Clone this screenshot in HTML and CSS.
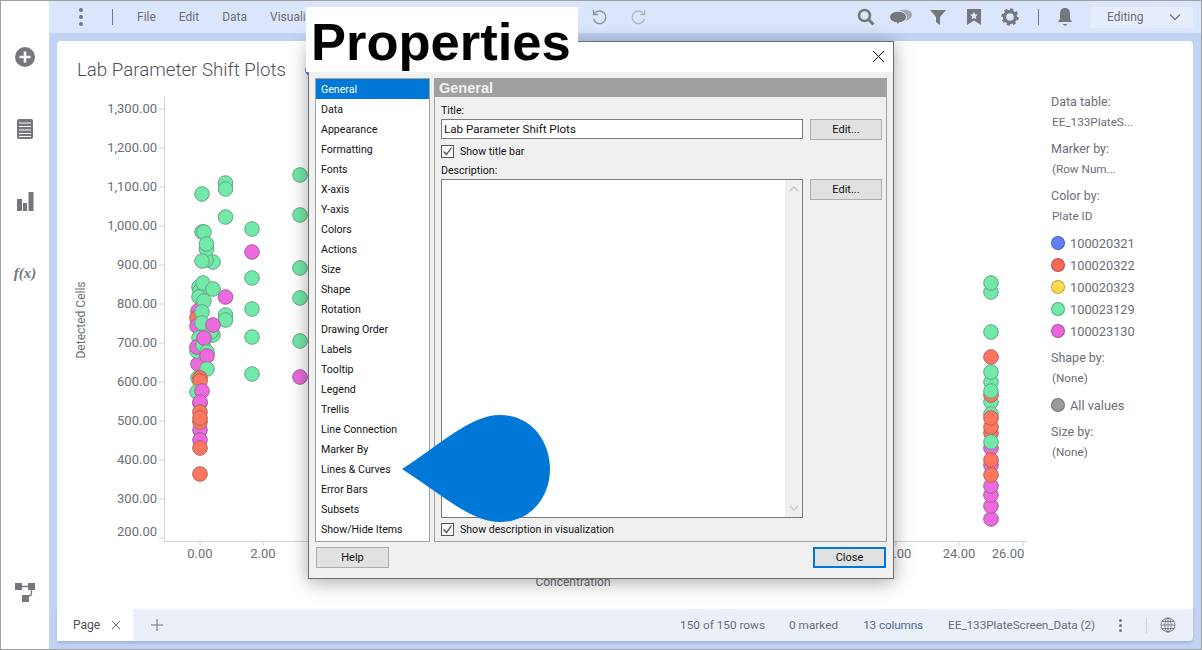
FILE: index.html
```html
<!DOCTYPE html>
<html lang="en">
<head>
  <meta charset="UTF-8">
  <title>Lab Parameter Shift Plots</title>
  <link rel="stylesheet" href="styles.css">
</head>
<body>
  <div class="app">
    <aside class="sidebar">
      <svg class="side-icon" width="22" height="22" viewBox="0 0 22 22"><circle cx="11" cy="11" r="10" fill="#75777f"/><path d="M11 5.500v11M5.500 11h11" stroke="#fff" stroke-width="2.600"/></svg>
      <svg class="side-icon" width="18" height="22" viewBox="0 0 18 22"><rect x="1" y="1" width="16" height="20" rx="2" fill="#75777f"/><path d="M3 5h12M3 8.500h12M3 12h12M3 15.500h12M3 18.500h12" stroke="#fff" stroke-width="1.200"/></svg>
      <svg class="side-icon" width="18" height="22" viewBox="0 0 18 22"><path d="M1 9h5v12H1zM7 13h4v8H7zM12.500 2H17.500v19h-5z" fill="#75777f"/></svg>
      <div class="side-fx">f(x)</div>
      <svg class="side-icon side-flow" width="22" height="22" viewBox="0 0 22 22"><path d="M1 1h7v7H1zM14 1h7v7h-7zM8 13h7v7H8z" fill="#75777f"/><path d="M8 4.500h6M17.500 8v3q0 3-3 3" fill="none" stroke="#75777f" stroke-width="1.300"/></svg>
    </aside>

    <main class="main">
      <header class="top-bar">
        <div class="kebab"><span></span><span></span><span></span></div>
        <div class="top-divider"></div>
        <nav class="top-menu">
          <span>File</span><span>Edit</span><span>Data</span><span>Visualization</span>
        </nav>
        <div class="history">
          <svg width="18" height="18" viewBox="0 0 18 18"><path d="M4.500 5.500a6.300 6.300 0 1 1-1 5.500" fill="none" stroke="#8e929c" stroke-width="1.400"/><path d="M3.500 2v4.500H8" fill="none" stroke="#8e929c" stroke-width="1.400"/></svg>
          <svg width="18" height="18" viewBox="0 0 18 18"><path d="M13.500 5.500a6.300 6.300 0 1 0 1 5.500" fill="none" stroke="#b4b8c2" stroke-width="1.400"/><path d="M14.500 2v4.500H10" fill="none" stroke="#b4b8c2" stroke-width="1.400"/></svg>
        </div>
        <div class="top-tools">
          <svg class="tool-search" width="18" height="18" viewBox="0 0 18 18"><circle cx="7.500" cy="7.500" r="5.500" fill="none" stroke="#75777f" stroke-width="2.600"/><path d="M11.500 11.500l5 5" stroke="#75777f" stroke-width="3"/></svg>
          <svg class="tool-chat" width="24" height="16" viewBox="0 0 24 16"><ellipse cx="15" cy="6" rx="8" ry="5.500" fill="#a2a5ae"/><ellipse cx="9" cy="8" rx="8.500" ry="5.800" fill="#75777f" stroke="#dbe5fb"/><path d="M7 12l2 3 2-3z" fill="#75777f"/></svg>
          <svg class="tool-filter" width="16" height="16" viewBox="0 0 16 16"><path d="M0 1h16L10 8v8L6 13V8z" fill="#75777f"/></svg>
          <svg class="tool-mark" width="14" height="16" viewBox="0 0 14 16"><path d="M0 0h14v16L7 11.500 0 16z" fill="#75777f"/><path d="M7 2.800l1.200 2.500 2.700.3-2 1.900.5 2.700L7 8.900 4.600 10.200l.5-2.700-2-1.900 2.700-.3z" fill="#dbe5fb"/></svg>
          <svg class="tool-gear" width="18" height="18" viewBox="0 0 18 18"><circle cx="9" cy="9" r="5.500" fill="none" stroke="#75777f" stroke-width="3.400"/><circle cx="9" cy="9" r="7.400" fill="none" stroke="#75777f" stroke-width="2.600" stroke-dasharray="3 2.810"/></svg>
          <div class="top-divider"></div>
          <svg class="tool-bell" width="16" height="18" viewBox="0 0 16 18"><path d="M8 0c3.500 0 5 2.500 5 6v5l2 3H1l2-3V6c0-3.500 1.500-6 5-6z" fill="#75777f"/><path d="M5.500 16h5L8 18z" fill="#75777f"/></svg>
          <div class="mode-select">
            <span>Editing</span>
            <svg width="12" height="8" viewBox="0 0 12 8"><path d="M1 1.500l5 5 5-5" fill="none" stroke="#75777f" stroke-width="1.300"/></svg>
          </div>
        </div>
      </header>

      <section class="workspace">
        <div class="card">
          <div class="card-title">
            <h1>Lab Parameter Shift Plots</h1>
            <span class="title-ring"></span>
          </div>
          <div class="card-body">
            <svg class="chart" width="983" height="519" viewBox="57 90 983 519">
              <g class="axis">
                <path d="M164.500 97V541.500H1027"/>
                <path d="M159 109h5M159 148h5M159 187h5M159 226h5M159 265h5M159 304h5M159 343h5M159 382h5M159 421h5M159 460h5M159 499h5M159 538h5"/>
                <path d="M200 541v5M263 541v5M896 541v5M959 541v5M1023 541v5"/>
              </g>
              <g class="tick-y">
                <text x="157" y="113">1,300.00</text>
                <text x="157" y="152">1,200.00</text>
                <text x="157" y="191">1,100.00</text>
                <text x="157" y="230">1,000.00</text>
                <text x="157" y="269">900.00</text>
                <text x="157" y="308">800.00</text>
                <text x="157" y="347">700.00</text>
                <text x="157" y="386">600.00</text>
                <text x="157" y="425">500.00</text>
                <text x="157" y="464">400.00</text>
                <text x="157" y="503">300.00</text>
                <text x="157" y="536">200.00</text>
              </g>
              <g class="tick-x">
                <text x="200" y="558">0.00</text>
                <text x="263" y="558">2.00</text>
                <text x="895" y="558">22.00</text>
                <text x="959" y="558">24.00</text>
                <text x="1008" y="558">26.00</text>
              </g>
              <text class="axis-title" transform="translate(85 320) rotate(-90)">Detected Cells</text>
              <text class="axis-title" x="573" y="586">Concentration</text>

              <g class="dots">
                <circle class="p" cx="300" cy="377"/>
                <circle class="g" cx="300" cy="175"/>
                <circle class="g" cx="300" cy="215"/>
                <circle class="g" cx="300" cy="268"/>
                <circle class="g" cx="300" cy="298"/>
                <circle class="g" cx="300" cy="341"/>
                <circle class="g" cx="252" cy="229"/>
                <circle class="p" cx="252" cy="252"/>
                <circle class="g" cx="252" cy="278"/>
                <circle class="g" cx="252" cy="309"/>
                <circle class="g" cx="252" cy="337"/>
                <circle class="g" cx="252" cy="374"/>
                <circle class="g" cx="225.500" cy="183"/>
                <circle class="g" cx="225.500" cy="189"/>
                <circle class="g" cx="225.500" cy="217"/>
                <circle class="g" cx="225.500" cy="315"/>
                <circle class="g" cx="225.500" cy="320"/>
                <circle class="p" cx="225.500" cy="297"/>
                <circle class="g" cx="202" cy="194"/>
                <circle class="g" cx="202" cy="232"/>
                <circle class="g" cx="204" cy="232"/>
                <circle class="g" cx="213" cy="262"/>
                <circle class="g" cx="206" cy="260"/>
                <circle class="g" cx="206.500" cy="249"/>
                <circle class="g" cx="206.500" cy="244"/>
                <circle class="g" cx="202" cy="261"/>
                <circle class="p" cx="198" cy="364"/>
                <circle class="g" cx="198" cy="378"/>
                <circle class="g" cx="199" cy="287"/>
                <circle class="g" cx="200" cy="291"/>
                <circle class="g" cx="203" cy="283"/>
                <circle class="g" cx="213" cy="289"/>
                <circle class="g" cx="199" cy="297"/>
                <circle class="p" cx="198" cy="311"/>
                <circle class="r" cx="197" cy="318"/>
                <circle class="p" cx="197" cy="326"/>
                <circle class="g" cx="204" cy="301"/>
                <circle class="g" cx="202" cy="312"/>
                <circle class="g" cx="199" cy="338"/>
                <circle class="g" cx="213" cy="335"/>
                <circle class="g" cx="211" cy="332"/>
                <circle class="g" cx="202" cy="323"/>
                <circle class="p" cx="213" cy="325"/>
                <circle class="g" cx="197" cy="351"/>
                <circle class="p" cx="197" cy="347"/>
                <circle class="g" cx="203" cy="345"/>
                <circle class="p" cx="204" cy="338"/>
                <circle class="g" cx="207" cy="352"/>
                <circle class="p" cx="207" cy="356"/>
                <circle class="p" cx="200" cy="403"/>
                <circle class="g" cx="207" cy="369"/>
                <circle class="r" cx="200" cy="378"/>
                <circle class="r" cx="200" cy="381"/>
                <circle class="g" cx="197" cy="392"/>
                <circle class="p" cx="202" cy="391"/>
                <circle class="p" cx="200" cy="402"/>
                <circle class="p" cx="200" cy="430"/>
                <circle class="p" cx="200" cy="440"/>
                <circle class="r" cx="200" cy="412"/>
                <circle class="r" cx="200" cy="422"/>
                <circle class="r" cx="200" cy="418"/>
                <circle class="r" cx="200" cy="448"/>
                <circle class="r" cx="200" cy="474"/>

                <circle class="g" cx="991" cy="292"/>
                <circle class="g" cx="991" cy="283"/>
                <circle class="g" cx="991" cy="332"/>
                <circle class="r" cx="991" cy="357"/>
                <circle class="g" cx="991" cy="382"/>
                <circle class="g" cx="991" cy="372"/>
                <circle class="g" cx="991" cy="402"/>
                <circle class="r" cx="991" cy="395"/>
                <circle class="g" cx="991" cy="391"/>
                <circle class="p" cx="991" cy="519"/>
                <circle class="p" cx="991" cy="506"/>
                <circle class="p" cx="991" cy="495"/>
                <circle class="p" cx="991" cy="486"/>
                <circle class="p" cx="991" cy="465"/>
                <circle class="p" cx="991" cy="448"/>
                <circle class="g" cx="991" cy="414"/>
                <circle class="r" cx="991" cy="433"/>
                <circle class="r" cx="991" cy="427"/>
                <circle class="r" cx="991" cy="418"/>
                <circle class="g" cx="991" cy="442"/>
                <circle class="r" cx="991" cy="460"/>
                <circle class="r" cx="991" cy="475"/>
              </g>
            </svg>

            <aside class="legend">
              <div class="legend-group">
                <div>Data table:</div>
                <div class="legend-value">EE_133PlateS...</div>
              </div>
              <div class="legend-group">
                <div>Marker by:</div>
                <div class="legend-value">(Row Num...</div>
              </div>
              <div class="legend-group">
                <div>Color by:</div>
                <div class="legend-value">Plate ID</div>
              </div>
              <div class="legend-group legend-items">
                <div class="legend-item"><i class="swatch swatch-blue"></i>100020321</div>
                <div class="legend-item"><i class="swatch swatch-red"></i>100020322</div>
                <div class="legend-item"><i class="swatch swatch-yellow"></i>100020323</div>
                <div class="legend-item"><i class="swatch swatch-green"></i>100023129</div>
                <div class="legend-item"><i class="swatch swatch-pink"></i>100023130</div>
              </div>
              <div class="legend-group">
                <div>Shape by:</div>
                <div class="legend-value">(None)</div>
              </div>
              <div class="legend-group legend-items">
                <div class="legend-item"><i class="swatch swatch-gray"></i>All values</div>
              </div>
              <div class="legend-group">
                <div>Size by:</div>
                <div class="legend-value">(None)</div>
              </div>
            </aside>
          </div>
        </div>

        <footer class="status-bar">
          <div class="page-tab">
            <span>Page</span>
            <svg width="10" height="10" viewBox="0 0 10 10"><path d="M1 1l8 8M9 1l-8 8" stroke="#6d7079" stroke-width="1"/></svg>
          </div>
          <svg class="add-page" width="12" height="12" viewBox="0 0 12 12"><path d="M6 0v12M0 6h12" stroke="#6d7079" stroke-width="1"/></svg>
          <div class="status-info">
            <span class="rows">150 of 150 rows</span>
            <span class="marked">0 marked</span>
            <span class="cols">13 columns</span>
            <span class="table-name">EE_133PlateScreen_Data (2)</span>
            <div class="kebab kebab-small"><span></span><span></span><span></span></div>
            <div class="status-divider"></div>
            <svg width="16" height="16" viewBox="0 0 16 16"><g fill="none" stroke="#75777f" stroke-width=".9"><circle cx="8" cy="8" r="7"/><ellipse cx="8" cy="8" rx="3.200" ry="7"/><path d="M8 1v14M1 8h14M2 4.500h12M2 11.500h12"/></g></svg>
          </div>
        </footer>
      </section>
    </main>
  </div>

  <!-- Properties dialog -->
  <div class="dialog">
    <div class="dialog-head">
      <svg width="13" height="13" viewBox="0 0 13 13"><path d="M1 1l11 11M12 1L1 12" stroke="#111" stroke-width="1"/></svg>
    </div>
    <div class="dialog-body">
      <div class="dialog-main">
        <ul class="prop-list">
          <li class="active">General</li>
          <li>Data</li>
          <li>Appearance</li>
          <li>Formatting</li>
          <li>Fonts</li>
          <li>X-axis</li>
          <li>Y-axis</li>
          <li>Colors</li>
          <li>Actions</li>
          <li>Size</li>
          <li>Shape</li>
          <li>Rotation</li>
          <li>Drawing Order</li>
          <li>Labels</li>
          <li>Tooltip</li>
          <li>Legend</li>
          <li>Trellis</li>
          <li>Line Connection</li>
          <li>Marker By</li>
          <li>Lines &amp; Curves</li>
          <li>Error Bars</li>
          <li>Subsets</li>
          <li>Show/Hide Items</li>
        </ul>
        <div class="prop-panel">
          <div class="panel-head">General</div>
          <div class="panel-form">
            <label class="field-label">Title:</label>
            <div class="field-row">
              <div class="text-input">Lab Parameter Shift Plots</div>
              <button class="btn btn-edit">Edit...</button>
            </div>
            <div class="check-row">
              <span class="check"><svg width="11" height="11" viewBox="0 0 11 11"><path d="M1.500 5.500l3 3 5-7" fill="none" stroke="#444" stroke-width="1.200"/></svg></span>
              Show title bar
            </div>
            <label class="field-label field-desc">Description:</label>
            <div class="field-row field-row-grow">
              <div class="text-area">
                <div class="scroll-track">
                  <svg width="10" height="6" viewBox="0 0 10 6"><path d="M1 5l4-4 4 4" fill="none" stroke="#c8c8c8" stroke-width="1.600"/></svg>
                  <svg width="10" height="6" viewBox="0 0 10 6"><path d="M1 1l4 4 4-4" fill="none" stroke="#c8c8c8" stroke-width="1.600"/></svg>
                </div>
              </div>
              <button class="btn btn-edit">Edit...</button>
            </div>
            <div class="check-row check-row-last">
              <span class="check"><svg width="11" height="11" viewBox="0 0 11 11"><path d="M1.500 5.500l3 3 5-7" fill="none" stroke="#444" stroke-width="1.200"/></svg></span>
              Show description in visualization
            </div>
          </div>
        </div>
      </div>
      <div class="dialog-foot">
        <button class="btn btn-foot">Help</button>
        <button class="btn btn-foot btn-default">Close</button>
      </div>
    </div>
  </div>

  <div class="callout-title">Properties</div>
  <svg class="callout-drop" width="150" height="108" viewBox="0 0 150 108">
    <path d="M2 54C40 30 70 0 100 0c30 0 50 25 50 54s-20 53-50 53C70 107 40 78 2 54z" fill="#0078d7"/>
  </svg>
</body>
</html>
```

FILE: styles.css
```css
* {
  box-sizing: border-box;
}

body {
  margin: 0;
  font-family: Roboto, sans-serif;
  color: #6b6e78;
  overflow: hidden;
}

.app {
  display: flex;
  width: 1202px;
  height: 650px;
  border: 1px solid #a0a0a0;
}

.sidebar {
  display: flex;
  flex-direction: column;
  align-items: center;
  width: 48px;
  flex-shrink: 0;
  padding-top: 45px;
  background: #fff;
}

.side-icon {
  display: block;
  margin-bottom: 50px;
}

.side-fx {
  margin-top: 1px;
  font-family: "Liberation Serif", serif;
  font-style: italic;
  font-weight: bold;
  font-size: 15px;
  line-height: 20px;
  color: #75777f;
}

.side-flow {
  margin-top: auto;
  margin-bottom: 45px;
}

.main {
  display: flex;
  flex-direction: column;
  flex: 1;
  min-width: 0;
  background: #c1d2f5;
}

.top-bar {
  display: flex;
  align-items: center;
  height: 32px;
  padding-left: 30px;
  background: #dbe5fb;
  font-size: 12px;
}

.kebab {
  display: flex;
  flex-direction: column;
  gap: 3px;
  width: 4px;
}

.kebab span {
  width: 4px;
  height: 4px;
  border-radius: 50%;
  background: #75777f;
}

.top-divider {
  width: 1px;
  height: 16px;
  margin-left: 29px;
  background: #75777f;
}

.top-menu {
  display: flex;
  gap: 23px;
  margin-left: 24px;
  color: #6b6e78;
}

.history {
  display: flex;
  gap: 22px;
  margin-left: 251px;
}

.top-tools {
  display: flex;
  align-items: center;
  margin-left: auto;
  padding-right: 8px;
}

.tool-chat { margin-left: 14px; }
.tool-filter { margin-left: 17px; }
.tool-mark { margin-left: 21px; }
.tool-gear { margin-left: 20px; }
.top-tools .top-divider { margin-left: 19px; }
.tool-bell { margin-left: 18px; }

.mode-select {
  display: flex;
  align-items: center;
  justify-content: space-between;
  width: 103px;
  height: 21px;
  margin-left: 17px;
  padding: 0 12px 0 17px;
  border-radius: 3px;
  background: #e6edfc;
}

.workspace {
  display: flex;
  flex-direction: column;
  flex: 1;
  min-height: 0;
  padding: 8px;
}

.card {
  flex: 1;
  min-height: 0;
  background: #fff;
  border-radius: 4px 4px 0 0;
}

.card-title {
  display: flex;
  align-items: center;
  height: 49px;
  padding: 8px 0 0 20px;
}

.card-title h1 {
  margin: 0;
  font-size: 18.700px;
  font-weight: 300;
  color: #4d505a;
}

.title-ring {
  width: 12px;
  height: 12px;
  margin-left: 19px;
  border: 2px solid #5672e0;
  border-radius: 50%;
}

.card-body {
  display: flex;
}

.chart {
  display: block;
  flex-shrink: 0;
}

.axis path {
  fill: none;
  stroke: #cfd2e0;
  stroke-width: 1;
}

.tick-y text,
.tick-x text {
  font-size: 13px;
  fill: #6b6e78;
}

.tick-y text { text-anchor: end; }
.tick-x text { text-anchor: middle; }

.axis-title {
  font-size: 12px;
  fill: #6b6e78;
  text-anchor: middle;
}

.dots circle {
  r: 7.300px;
  stroke-width: 1;
}

.g { fill: #72e9a8; stroke: #64a585; }
.p { fill: #ec6ade; stroke: #a0609a; }
.r { fill: #ff7660; stroke: #ad6557; }

.legend {
  margin-left: 11px;
  padding-top: 1px;
  font-size: 12.500px;
  line-height: 21px;
  color: #6b6e78;
}

.legend-group {
  margin-bottom: 5px;
}

.legend-value {
  padding-left: 1px;
  font-size: 11.700px;
}

.legend-items {
  margin-top: 5px;
  margin-bottom: 5px;
}

.legend-item {
  display: flex;
  align-items: center;
  gap: 5px;
  height: 22px;
  font-size: 12.800px;
}

.swatch {
  width: 14px;
  height: 14px;
  border: 1px solid rgba(0, 0, 0, 0.25);
  border-radius: 50%;
}

.swatch-blue { background: #5f80f5; }
.swatch-red { background: #f4695a; }
.swatch-yellow { background: #ffd950; }
.swatch-green { background: #71e8a6; }
.swatch-pink { background: #ea68dc; }
.swatch-gray { background: #9a9a9a; }

.status-bar {
  display: flex;
  align-items: center;
  height: 32px;
  flex-shrink: 0;
  background: #ebeff8;
  border-radius: 0 0 4px 4px;
  box-shadow: 0 2px 3px rgba(90, 110, 160, 0.3);
  font-size: 11.800px;
}

.page-tab {
  display: flex;
  align-items: center;
  gap: 11px;
  width: 76px;
  height: 100%;
  padding-left: 16px;
  background: #fff;
  color: #4d505a;
  font-size: 12px;
}

.add-page {
  margin-left: 18px;
}

.status-info {
  display: flex;
  align-items: center;
  margin-left: auto;
  padding-right: 17px;
}

.marked { margin-left: 24px; }
.cols { margin-left: 25px; color: #4f6a94; letter-spacing: -0.15px; }
.table-name { margin-left: 25px; letter-spacing: -0.08px; }

.kebab-small {
  gap: 2px;
  margin-left: 24px;
}

.kebab-small span {
  width: 3px;
  height: 3px;
}

.status-divider {
  width: 1px;
  height: 16px;
  margin-left: 23px;
  background: #cdd2de;
}

.status-info svg {
  margin-left: 13px;
}

/* dialog sits over the page */
.dialog {
  position: absolute;
  left: 308px;
  top: 41px;
  display: flex;
  flex-direction: column;
  width: 586px;
  height: 538px;
  border: 1px solid #6e6e6e;
  background: #f0f0f0;
  box-shadow: 0 3px 18px rgba(0, 0, 0, 0.35);
  font-size: 10.600px;
  color: #111;
}

.dialog-head {
  display: flex;
  align-items: center;
  justify-content: flex-end;
  height: 30px;
  padding: 0 8px 2px 0;
  background: #fff;
}

.dialog-body {
  display: flex;
  flex-direction: column;
  flex: 1;
  min-height: 0;
  padding: 6px 6px 10px;
}

.dialog-main {
  display: flex;
  gap: 4px;
  height: 464px;
}

.prop-list {
  width: 115px;
  margin: 0;
  padding: 0;
  list-style: none;
  background: #fff;
  border: 1px solid #a0a0a0;
}

.prop-list li {
  height: 20px;
  padding: 1px 0 0 5px;
  line-height: 20px;
}

.prop-list .active {
  background: #0078d7;
  color: #fff;
}

.prop-panel {
  display: flex;
  flex-direction: column;
  flex: 1;
  border: 1px solid #a0a0a0;
  border-top: 0;
}

.panel-head {
  height: 19px;
  padding: 1px 0 0 4px;
  background: #a0a0a0;
  color: #f0f0f0;
  font-family: "Liberation Sans", sans-serif;
  font-size: 14.500px;
  font-weight: bold;
  line-height: 19px;
}

.panel-form {
  display: flex;
  flex-direction: column;
  flex: 1;
  min-height: 0;
  padding: 6px 4px 0 6px;
}

.field-label {
  height: 16px;
  line-height: 16px;
}

.field-desc {
  margin-top: 3px;
}

.field-row {
  display: flex;
  align-items: flex-start;
  gap: 7px;
}

.field-row-grow {
  flex: 1;
  min-height: 0;
}

.text-input {
  width: 362px;
  height: 20px;
  padding-left: 2px;
  border: 1px solid #7a7a7a;
  background: #fff;
  font-size: 11.600px;
  line-height: 18px;
}

.text-area {
  display: flex;
  justify-content: flex-end;
  width: 362px;
  height: 100%;
  border: 1px solid #7a7a7a;
  background: #fff;
}

.scroll-track {
  display: flex;
  flex-direction: column;
  align-items: center;
  justify-content: space-between;
  width: 17px;
  padding: 6px 0;
  background: #f0f0f0;
}

.btn {
  padding: 0;
  border: 1px solid #adadad;
  background: #e1e1e1;
  font-family: inherit;
  font-size: 11px;
  color: #111;
}

.btn-edit {
  width: 72px;
  height: 21px;
}

.check-row {
  display: flex;
  align-items: center;
  gap: 6px;
  height: 18px;
  margin-top: 2px;
}

.check-row-last {
  margin: 2px 0 3px;
}

.check {
  display: flex;
  align-items: center;
  justify-content: center;
  width: 13px;
  height: 13px;
  border: 1px solid #555;
  background: #fff;
}

.dialog-foot {
  display: flex;
  justify-content: space-between;
  margin-top: 5px;
  padding: 0 1px;
}

.btn-foot {
  width: 73px;
  height: 21px;
}

.btn-default {
  border: 2px solid #0078d7;
}

.callout-title {
  position: absolute;
  left: 306px;
  top: 7px;
  width: 272px;
  height: 65px;
  padding-left: 5px;
  background: #fff;
  font-family: "Liberation Sans", sans-serif;
  font-size: 52.500px;
  font-weight: bold;
  line-height: 70px;
  color: #000;
}

.callout-drop {
  position: absolute;
  left: 400px;
  top: 415px;
}
```
